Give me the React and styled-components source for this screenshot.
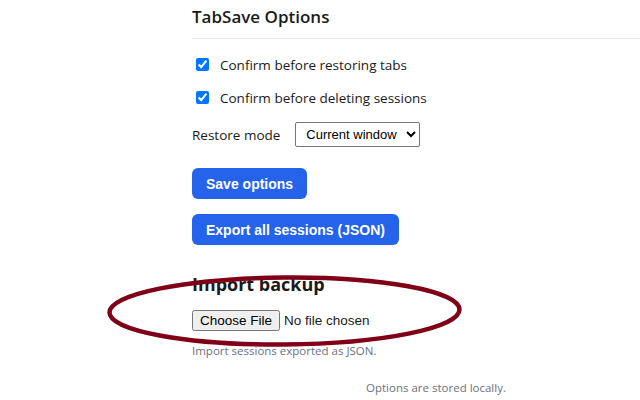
import React from 'react';
import styled, { createGlobalStyle } from 'styled-components';

const Global = createGlobalStyle`
  html, body { margin: 0; padding: 0; background: #fff; overflow: hidden; }
  body { font-family: "Open Sans", "Noto Sans", sans-serif; color: #1a1a1a; }
`;

const Page = styled.div`
  position: relative;
  width: 640px;
  height: 400px;
  overflow: hidden;
`;

const Main = styled.main`
  margin-left: 192px;
  width: 488px;
  display: flex;
  flex-direction: column;
`;

const Title = styled.h1`
  margin: 0;
  padding: 5px 0 10px;
  font-size: 17px;
  font-weight: 600;
  color: #1a1a1a;
  border-bottom: 1px solid #e6e6e6;
`;

const Options = styled.div`
  display: flex;
  flex-direction: column;
  padding-top: 9px;
`;

const CheckRow = styled.label`
  display: flex;
  align-items: center;
  height: 33px;
  font-size: 13.5px;
  input {
    width: 13px;
    height: 13px;
    margin: 0 11px 0 4px;
  }
`;

const SelectRow = styled.div`
  display: flex;
  align-items: center;
  gap: 15px;
  margin-top: 8px;
  font-size: 13.5px;
  select {
    height: 25px;
    width: 125px;
    font-family: "Liberation Sans", Arial, sans-serif;
    font-size: 13px;
    border: 1px solid #767676;
    border-radius: 2px;
    padding: 0 2px 0 6px;
    background: #fff;
    color: #000;
  }
`;

const Actions = styled.div`
  display: flex;
  flex-direction: column;
  align-items: flex-start;
  gap: 15px;
  margin-top: 21px;
`;

const Button = styled.button`
  height: 31px;
  padding: 0 14px;
  background: #2563eb;
  color: #fff;
  border: 0;
  border-radius: 6px;
  font-family: "Liberation Sans", Arial, sans-serif;
  font-weight: 700;
  font-size: 14px;
`;

const Section = styled.section`
  margin-top: 27px;
  display: flex;
  flex-direction: column;
  align-items: flex-start;
`;

const SubTitle = styled.h2`
  margin: 0;
  font-size: 18px;
  font-weight: 700;
  line-height: 24px;
  color: #1a1a1a;
`;

const FileInput = styled.input`
  margin-top: 14px;
  font-family: "Liberation Sans", Arial, sans-serif;
  font-size: 13.5px;
  color: #1a1a1a;
`;

const Hint = styled.p`
  margin: 12px 0 0;
  font-size: 11.5px;
  color: #6b7280;
`;

const Footer = styled.p`
  margin: 22px 0 0;
  text-align: center;
  font-size: 11.5px;
  color: #6b7280;
`;

const Mark = styled.svg`
  position: absolute;
  left: 0;
  top: 0;
  pointer-events: none;
`;

export default function App() {
  return (
    <Page>
      <Global />
      <Main>
        <Title>TabSave Options</Title>
        <Options>
          <CheckRow><input type="checkbox" defaultChecked />Confirm before restoring tabs</CheckRow>
          <CheckRow><input type="checkbox" defaultChecked />Confirm before deleting sessions</CheckRow>
          <SelectRow>
            <span>Restore mode</span>
            <select defaultValue="current">
              <option value="current">Current window</option>
              <option value="new">New window</option>
            </select>
          </SelectRow>
        </Options>
        <Actions>
          <Button>Save options</Button>
          <Button>Export all sessions (JSON)</Button>
        </Actions>
        <Section>
          <SubTitle>Import backup</SubTitle>
          <FileInput type="file" accept="application/json" />
          <Hint>Import sessions exported as JSON.</Hint>
        </Section>
        <Footer>Options are stored locally.</Footer>
      </Main>
      <Mark width="640" height="400">
        <ellipse cx="284.5" cy="311" rx="175" ry="33.5" fill="none" stroke="#800018" strokeWidth="4.5" transform="rotate(-0.5 284.5 311)" />
      </Mark>
    </Page>
  );
}
